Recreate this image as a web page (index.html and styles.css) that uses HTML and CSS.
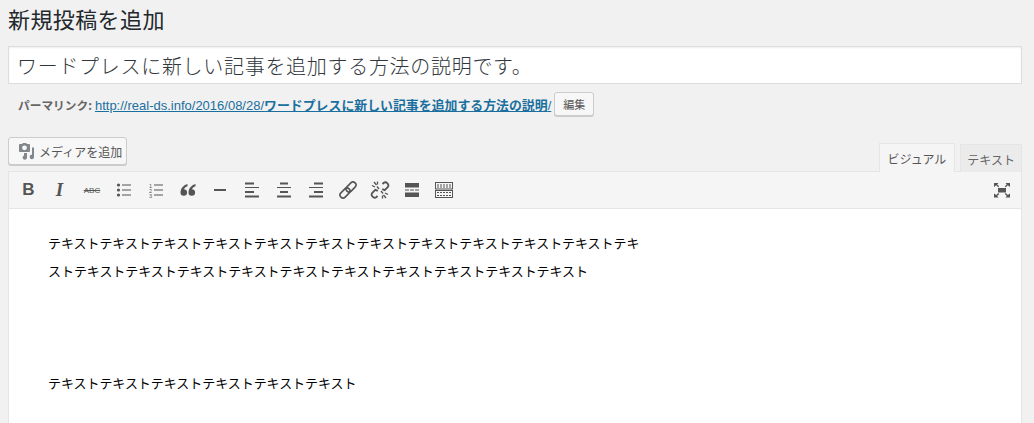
FILE: index.html
```html
<!DOCTYPE html>
<html lang="ja">

<head>
    <meta charset="utf-8">
    <title>新規投稿を追加</title>
    <link rel="stylesheet" href="styles.css">
</head>

<body>
    <div class="wrap">
        <h1 class="page-title">新規投稿を追加</h1>

        <input class="title-input" type="text" value="ワードプレスに新しい記事を追加する方法の説明です。">

        <div class="permalink">
            <strong class="permalink-label">パーマリンク:</strong>
            <a class="permalink-url" href="#">http://real-ds.info/2016/08/28/<b>ワードプレスに新しい記事を追加する方法の説明</b>/</a>
            <button class="edit-btn">編集</button>
        </div>

        <div class="editor-tools">
            <button class="media-btn">
                <svg class="media-icon" width="18" height="18" viewBox="0 0 18 18">
                    <path d="M3 2h2l1-1h3l1 1h2a1 1 0 0 1 1 1v6a1 1 0 0 1-1 1H3a1 1 0 0 1-1-1V3a1 1 0 0 1 1-1z" fill="#82878c" />
                    <circle cx="7.5" cy="5.800" r="2.400" fill="#f7f7f7" />
                    <path d="M15 5.500h2V15a2.200 2.200 0 1 1-2-2.200z" fill="#82878c" />
                    <path d="M7 11h3v4.500a2.200 2.200 0 1 1-3-2z" fill="#82878c" />
                </svg>
                メディアを追加
            </button>
            <div class="tabs">
                <div class="tab active">ビジュアル</div>
                <div class="tab">テキスト</div>
            </div>
        </div>

        <div class="editor">
            <div class="toolbar">
                <div class="tool-group">
                    <span class="tool tool-b">B</span>
                    <span class="tool tool-i">I</span>
                    <span class="tool tool-abc">ABC</span>
                    <span class="tool">
                        <svg width="20" height="20" viewBox="0 0 20 20" fill="#555">
                            <circle cx="4.500" cy="5" r="1.600" /><circle cx="4.500" cy="10" r="1.600" /><circle cx="4.500" cy="15" r="1.600" />
                            <rect x="8" y="4.500" width="9" height="1" /><rect x="8" y="9.500" width="9" height="1" /><rect x="8" y="14.500" width="9" height="1" />
                        </svg>
                    </span>
                    <span class="tool">
                        <svg width="20" height="20" viewBox="0 0 20 20" fill="#555">
                            <text x="3" y="7.500" class="ol-num">1</text><text x="3" y="12.500" class="ol-num">2</text><text x="3" y="17.500" class="ol-num">3</text>
                            <rect x="8" y="4.500" width="9" height="1" /><rect x="8" y="9.500" width="9" height="1" /><rect x="8" y="14.500" width="9" height="1" />
                        </svg>
                    </span>
                    <span class="tool">
                        <svg width="20" height="20" viewBox="0 0 20 20" fill="#555">
                            <path d="M9.500 4C6 5 2.500 8 2.500 12.500a3.300 3.300 0 1 0 3.400-3.300c.3-1 1.600-2.300 3.600-3z" />
                            <path d="M17.500 4C14 5 10.500 8 10.500 12.500a3.300 3.300 0 1 0 3.400-3.300c.3-1 1.600-2.300 3.600-3z" />
                        </svg>
                    </span>
                    <span class="tool">
                        <svg width="20" height="20" viewBox="0 0 20 20" fill="#555"><rect x="4" y="9" width="12" height="2" /></svg>
                    </span>
                    <span class="tool">
                        <svg width="20" height="20" viewBox="0 0 20 20" fill="#555">
                            <rect x="3" y="2.500" width="9" height="2" /><rect x="3" y="7" width="14" height="1" /><rect x="3" y="11" width="9" height="2" /><rect x="3" y="15.500" width="14" height="2" />
                        </svg>
                    </span>
                    <span class="tool">
                        <svg width="20" height="20" viewBox="0 0 20 20" fill="#555">
                            <rect x="6" y="2.500" width="8" height="2" /><rect x="3" y="7" width="14" height="1" /><rect x="6" y="11" width="8" height="2" /><rect x="3" y="15.500" width="14" height="2" />
                        </svg>
                    </span>
                    <span class="tool">
                        <svg width="20" height="20" viewBox="0 0 20 20" fill="#555">
                            <rect x="8" y="2.500" width="9" height="2" /><rect x="3" y="7" width="14" height="1" /><rect x="8" y="11" width="9" height="2" /><rect x="3" y="15.500" width="14" height="2" />
                        </svg>
                    </span>
                    <span class="tool">
                        <svg width="20" height="20" viewBox="0 0 20 20" fill="none" stroke="#555" stroke-width="1.600">
                            <g transform="rotate(-45 10 10)">
                                <rect x="0" y="7" width="11.500" height="6" rx="3" />
                                <rect x="8.500" y="7" width="11.500" height="6" rx="3" />
                            </g>
                        </svg>
                    </span>
                    <span class="tool">
                        <svg width="20" height="20" viewBox="0 0 20 20" fill="none" stroke="#555" stroke-width="1.800">
                            <path d="M7.500 16l-1 1a3 3 0 0 1-4.200-4.200l3-3 2.500 1" />
                            <path d="M12.500 4l1-1a3 3 0 0 1 4.200 4.200l-3 3-2.500-1" />
                            <path d="M4 2l2.500 3M2 5.500l3 1.500M7.500 1.500v3M16 18l-2.500-3M18 14.500L15 13M12.500 18.500v-3M9 9l-2-2.500M11 11l2 2.500" stroke-width="1.300" />
                        </svg>
                    </span>
                    <span class="tool">
                        <svg width="20" height="20" viewBox="0 0 20 20" fill="#555">
                            <rect x="3" y="3" width="14" height="4.500" /><rect x="3" y="9.500" width="4" height="1" /><rect x="8" y="9.500" width="4" height="1" /><rect x="13" y="9.500" width="4" height="1" /><rect x="3" y="12.500" width="14" height="4.500" />
                        </svg>
                    </span>
                    <span class="tool">
                        <svg width="20" height="20" viewBox="0 0 20 20">
                            <g fill="none" stroke="#555">
                                <rect x="1.500" y="2.500" width="17" height="6.500" />
                                <rect x="1.500" y="10.500" width="17" height="7" />
                            </g>
                            <g stroke="#555" stroke-dasharray="2 1">
                                <path d="M3 5h14M3 7h14M3 12.500h14M3 15.500h14" />
                            </g>
                        </svg>
                    </span>
                </div>
                <span class="tool">
                    <svg width="20" height="20" viewBox="0 0 20 20" fill="#555">
                        <rect x="6" y="8" width="8" height="4.500" />
                        <path d="M2 3h4.500L5.200 4.400 7.200 6.300 6.200 7.300 4.200 5.300 2 7zM18 3h-4.500l1.300 1.400-2 1.900 1 1 2-2L18 7zM2 17.500h4.500L5.200 16.100l2-2-1-1-2 2L2 13.500zM18 17.500h-4.500l1.300-1.400-2-2 1-1 2 2 2.200-1.600z" />
                    </svg>
                </span>
            </div>
            <div class="content">
                <p class="body-text">テキストテキストテキストテキストテキストテキストテキストテキストテキストテキストテキストテキストテキストテキストテキストテキストテキストテキストテキストテキストテキストテキスト</p>
                <p class="body-text">テキストテキストテキストテキストテキストテキスト</p>
            </div>
        </div>
    </div>
</body>

</html>
```

FILE: styles.css
```css
* {
    box-sizing: border-box;
    margin: 0;
    padding: 0;
}

html,
body {
    height: 423px;
    overflow: hidden;
}

body {
    background-color: #f1f1f1;
    color: #444;
    font-family: "Noto Sans CJK JP", "Liberation Sans", sans-serif;
}

.wrap {
    padding: 3px 12px 0 8px;
}

.page-title {
    color: #23282d;
    font-size: 22px;
    font-weight: 400;
    line-height: 30px;
    letter-spacing: 0.4px;
}

.title-input {
    display: block;
    width: 100%;
    height: 38px;
    margin-top: 13px;
    padding: 0 8px;
    background: #fff;
    border: 1px solid #ddd;
    box-shadow: inset 0 1px 2px rgba(0, 0, 0, 0.07);
    color: #32373c;
    font-family: "Noto Sans CJK JP", sans-serif;
    font-size: 20px;
    font-weight: 300;
    letter-spacing: 0.7px;
    outline: none;
}

/* permalink row */
.permalink {
    display: flex;
    align-items: center;
    height: 24px;
    margin-top: 8px;
    padding-left: 10px;
    font-size: 13px;
}

.permalink-label {
    color: #666;
    font-size: 11.7px;
    margin-right: 3px;
}

.permalink-url {
    color: #1a6f9e;
    font-family: "Liberation Sans", "Noto Sans CJK JP", sans-serif;
    font-size: 13px;
}

.permalink-url b {
    font-family: "Noto Sans CJK JP", sans-serif;
    font-size: 12.9px;
}

.edit-btn {
    width: 40px;
    height: 24px;
    margin-left: 3px;
    background: #f7f7f7;
    border: 1px solid #ccc;
    border-radius: 3px;
    box-shadow: 0 1px 0 #ccc;
    color: #555;
    font-family: "Noto Sans CJK JP", sans-serif;
    font-size: 11px;
}

/* media button + tabs */
.editor-tools {
    display: flex;
    justify-content: space-between;
    height: 35px;
    margin-top: 21px;
}

.media-btn {
    display: flex;
    align-items: center;
    gap: 4px;
    width: 119px;
    height: 28px;
    padding-left: 8px;
    background: #f7f7f7;
    border: 1px solid #ccc;
    border-radius: 3px;
    box-shadow: 0 1px 0 #ccc;
    color: #555;
    font-family: "Noto Sans CJK JP", sans-serif;
    font-size: 12px;
}

.tabs {
    display: flex;
    align-items: flex-end;
    gap: 5px;
}

.tab {
    height: 28px;
    padding: 0 6px;
    background: #ebebeb;
    border: 1px solid #e5e5e5;
    border-bottom: none;
    color: #666;
    font-size: 12px;
    line-height: 29px;
}

.tab.active {
    position: relative;
    z-index: 1;
    height: 29px;
    padding: 0 8px;
    background: #f5f5f5;
    border-color: #e5e5e5;
    color: #555;
}

/* editor */
.editor {
    height: 260px;
    margin-top: -1px;
    background: #fff;
    border: 1px solid #e5e5e5;
}

.toolbar {
    display: flex;
    justify-content: space-between;
    align-items: center;
    height: 37px;
    padding: 0 4px;
    background: #f5f5f5;
    border-bottom: 1px solid #e5e5e5;
}

.tool-group {
    display: flex;
    gap: 2px;
}

.tool {
    display: flex;
    justify-content: center;
    align-items: center;
    width: 30px;
    height: 28px;
    color: #555;
}

.tool-b {
    padding-left: 1px;
    font-family: "Liberation Sans", sans-serif;
    font-size: 17px;
    font-weight: 700;
}

.tool-i {
    padding-right: 1px;
    font-family: "Liberation Serif", serif;
    font-size: 19px;
    font-style: italic;
    font-weight: 700;
}

.tool-abc {
    font-family: "Liberation Sans", sans-serif;
    font-size: 8px;
    text-decoration: line-through;
}

.ol-num {
    font-family: "Liberation Sans", sans-serif;
    font-size: 5.5px;
}

.content {
    padding: 20px 39px;
}

.body-text {
    max-width: 600px;
    color: #000;
    font-size: 13px;
    letter-spacing: -0.05px;
    line-height: 28px;
}

.body-text + .body-text {
    margin-top: 84px;
}
```
